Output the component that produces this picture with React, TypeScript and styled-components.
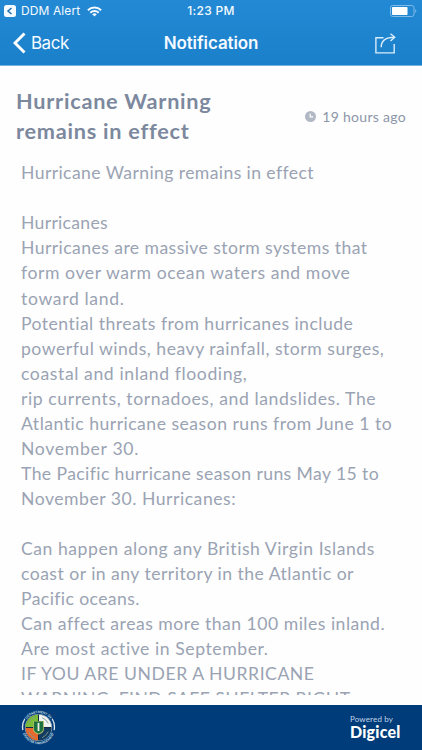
import * as React from 'react'
import styled, { createGlobalStyle } from 'styled-components'

const GlobalStyle = createGlobalStyle`
  * {
    box-sizing: border-box;
  }
  body {
    margin: 0;
    background-color: #fefefe;
  }
`

const Screen = styled.div`
  width: 422px;
  height: 750px;
  display: flex;
  flex-direction: column;
  overflow: hidden;
  background-color: #fefefe;
  font-family: Lato, 'Liberation Sans', sans-serif;
`

const Header = styled.header`
  height: 66px;
  flex: none;
  color: #f4faff;
  background: linear-gradient(#2489d4, #1b80ca);
  border-bottom: 1px solid #73b4e2;
  font-family: Inter, 'Liberation Sans', sans-serif;
`

const Bar = styled.div<{ height: number }>`
  height: ${(props) => props.height}px;
  display: grid;
  grid-template-columns: 1fr auto 1fr;
  align-items: center;
`

const Left = styled.div<{ indent: number }>`
  display: flex;
  align-items: center;
  padding-left: ${(props) => props.indent}px;
`

const Right = styled.div<{ indent: number }>`
  display: flex;
  justify-content: flex-end;
  padding-right: ${(props) => props.indent}px;
`

const StatusText = styled.span<{ strong?: boolean }>`
  font-size: 12px;
  line-height: 22px;
  font-weight: ${(props) => (props.strong ? 500 : 400)};
  letter-spacing: ${(props) => (props.strong ? '0.3px' : '0.1px')};
`

const AppName = styled(StatusText)`
  margin: 0 7px 0 5px;
`

const BackText = styled.span`
  font-size: 17px;
  margin-left: 5px;
  letter-spacing: -0.5px;
`

const NavTitle = styled.h1`
  font-size: 17px;
  font-weight: 600;
  margin: 0;
  letter-spacing: -0.1px;
`

const Content = styled.main`
  height: 629px;
  flex: none;
  overflow: hidden;
  padding: 20px 16px 0 16px;
`

const Heading = styled.div`
  display: flex;
  justify-content: space-between;
  align-items: center;
`

const Title = styled.h2`
  margin: 0;
  width: 220px;
  font-size: 21.7px;
  line-height: 30px;
  font-weight: 700;
  letter-spacing: 0.75px;
  color: #7c889d;
`

const Time = styled.div`
  display: flex;
  align-items: center;
  gap: 6px;
  font-size: 14px;
  letter-spacing: 0.3px;
  white-space: nowrap;
  color: #8c96a9;
`

const Message = styled.div`
  padding: 14.3px 0 0 5px;
  font-size: 17.6px;
  color: #9aa3b3;
`

const Line = styled.div<{ spacing?: number }>`
  height: 25.05px;
  line-height: 25.05px;
  white-space: nowrap;
  letter-spacing: ${(props) => props.spacing ?? 0.4}px;
`

const Footer = styled.footer`
  height: 45px;
  margin-top: auto;
  flex: none;
  display: flex;
  justify-content: space-between;
  align-items: center;
  padding: 0 21px;
  background-color: #003b7a;
  color: #ffffff;
`

const Powered = styled.div`
  display: flex;
  flex-direction: column;
  width: 51px;
  padding-bottom: 1px;
`

const PoweredBy = styled.span`
  font-size: 8px;
  line-height: 10px;
  letter-spacing: 0.15px;
  white-space: nowrap;
  color: #c3d4e8;
`

const Brand = styled.span`
  font-size: 16px;
  line-height: 16px;
  font-weight: 900;
  letter-spacing: 0.2px;
`

const lines: Array<{ text: string; spacing?: number }> = [
  { text: 'Hurricane Warning remains in effect' },
  { text: '' },
  { text: 'Hurricanes', spacing: 0.3 },
  { text: 'Hurricanes are massive storm systems that', spacing: 0.43 },
  { text: 'form over warm ocean waters and move', spacing: 0.57 },
  { text: 'toward land.', spacing: 0.65 },
  { text: 'Potential threats from hurricanes include', spacing: 0.46 },
  { text: 'powerful winds, heavy rainfall, storm surges,', spacing: 0.51 },
  { text: 'coastal and inland flooding,', spacing: 0.6 },
  { text: 'rip currents, tornadoes, and landslides. The', spacing: 0.59 },
  { text: 'Atlantic hurricane season runs from June 1 to', spacing: 0.49 },
  { text: 'November 30.', spacing: 0.7 },
  { text: 'The Pacific hurricane season runs May 15 to' },
  { text: 'November 30. Hurricanes:', spacing: 0.52 },
  { text: '' },
  { text: 'Can happen along any British Virgin Islands', spacing: 0.54 },
  { text: 'coast or in any territory in the Atlantic or', spacing: 0.47 },
  { text: 'Pacific oceans.' },
  { text: 'Can affect areas more than 100 miles inland.', spacing: 0.49 },
  { text: 'Are most active in September.', spacing: 0.57 },
  { text: 'IF YOU ARE UNDER A HURRICANE', spacing: 0.54 },
  { text: 'WARNING, FIND SAFE SHELTER RIGHT', spacing: 0.46 },
]

const ReturnIcon = () => (
  <svg width="12" height="12" viewBox="0 0 12 12">
    <rect width="12" height="12" rx="2.5" fill="#f4faff" />
    <path d="M7.500 3 4 6l3.500 3" fill="none" stroke="#1c6fb0" strokeWidth="1.500" />
  </svg>
)

const WifiIcon = () => (
  <svg width="15" height="11" viewBox="0 0 15 11" fill="none" stroke="#f4faff" strokeWidth="1.900">
    <path d="M.9 4.200a9.400 9.400 0 0 1 13.200 0" />
    <path d="M3.300 6.700a6 6 0 0 1 8.400 0" />
    <path d="M7.500 10.600 5.200 8.300a3.300 3.300 0 0 1 4.600 0z" fill="#f4faff" stroke="none" />
  </svg>
)

const BatteryIcon = () => (
  <svg width="27" height="12" viewBox="0 0 27 12">
    <rect x=".5" y=".5" width="23.500" height="11" rx="2.200" fill="none" stroke="#7fbbe8" />
    <rect x="2" y="2" width="15.500" height="8" rx=".8" fill="#ffffff" />
    <path d="M25.200 4.200v3.600a2 2 0 0 0 0-3.600z" fill="#7fbbe8" />
  </svg>
)

const BackIcon = () => (
  <svg width="13" height="22" viewBox="0 0 13 22">
    <path d="M11.500 1.500 2 11l9.500 9.500" fill="none" stroke="#ffffff" strokeWidth="2.900" />
  </svg>
)

const ShareIcon = () => (
  <svg width="21" height="21" viewBox="0 0 21 21" fill="none" stroke="#d9ecfa" strokeWidth="1.400">
    <path d="M8.500 4.700H.9v15.200h18.300v-9" />
    <path d="M6.200 14.300C6.200 8 10 4.300 19.500 4.300" />
    <path d="m15.500.8 4.200 3.500-4.200 3.700" />
  </svg>
)

const ClockIcon = () => (
  <svg width="11" height="11" viewBox="0 0 11 11">
    <circle cx="5.500" cy="5.500" r="5.500" fill="#b2b9c5" />
    <path d="M5.200 2.800v3h3" fill="none" stroke="#ffffff" strokeWidth="1.200" />
  </svg>
)

const SealText = styled.text`
  font-family: Lato, sans-serif;
  font-weight: 700;
  fill: #d5e2ea;
`

// Department of Disaster Management seal
const Seal = () => (
  <svg width="35" height="35" viewBox="0 0 34 34">
    <defs>
      <path id="sealTop" d="M3 17a14 14 0 0 1 28 0" />
      <path id="sealBottom" d="M.8 17a16.200 16.200 0 0 0 32.400 0" />
    </defs>
    <path d="M3.700 8.500a15.800 15.800 0 0 0-1.900 11" fill="none" stroke="#dce7ee" strokeWidth="1.300" />
    <path d="M30.300 8.500a15.800 15.800 0 0 1 1.900 11" fill="none" stroke="#dce7ee" strokeWidth="1.300" />
    <circle cx="17" cy="17" r="13.200" fill="#bccbd0" />
    <circle cx="17" cy="17" r="12.600" fill="#10283f" />
    <path d="M16.500 16.500V4.500a12 12 0 0 0-12 12z" fill="#79bd36" />
    <path d="M17.500 16.500V4.500a12 12 0 0 1 12 12z" fill="#eef3f2" />
    <path d="M16.500 17.500v12a12 12 0 0 1-12-12z" fill="#e8672b" />
    <path d="M17.500 17.500v12a12 12 0 0 0 12-12z" fill="#123c62" />
    <path d="M7.500 13q2-5 6-6M20.500 7.500q4 1.500 6 5.500M7.500 21q2 4.500 6 6M20.500 27q4-2 6-6" fill="none" stroke="#7e9991" strokeWidth=".9" />
    <path d="M11.800 10.800h10.400v8.500q-.5 3.500-5.200 4.500-4.700-1-5.200-4.500z" fill="#b4b967" />
    <path d="M12.600 11.200h8.800v7.800q-.8 3-4.400 3.800-3.600-.8-4.400-3.800z" fill="#1b713f" />
    <path d="M17 12.500v8" stroke="#e9eee0" strokeWidth="1.800" />
    <SealText fontSize="3.200">
      <textPath href="#sealTop" startOffset="50%" textAnchor="middle">DEPARTMENT OF</textPath>
    </SealText>
    <SealText fontSize="3.200">
      <textPath href="#sealBottom" startOffset="50%" textAnchor="middle">DISASTER MANAGEMENT</textPath>
    </SealText>
  </svg>
)

const App = () => {
  return (
    <>
      <GlobalStyle />
      <Screen>
        <Header>
          <Bar height={22}>
            <Left indent={4}>
              <ReturnIcon />
              <AppName>DDM Alert</AppName>
              <WifiIcon />
            </Left>
            <StatusText strong>1:23 PM</StatusText>
            <Right indent={5}>
              <BatteryIcon />
            </Right>
          </Bar>
          <Bar height={42}>
            <Left indent={13}>
              <BackIcon />
              <BackText>Back</BackText>
            </Left>
            <NavTitle>Notification</NavTitle>
            <Right indent={26}>
              <ShareIcon />
            </Right>
          </Bar>
        </Header>
        <Content>
          <Heading>
            <Title>Hurricane Warning remains in effect</Title>
            <Time>
              <ClockIcon />
              19 hours ago
            </Time>
          </Heading>
          <Message>
            {lines.map((line, index) => (
              <Line key={index} spacing={line.spacing}>{line.text}</Line>
            ))}
          </Message>
        </Content>
        <Footer>
          <Seal />
          <Powered>
            <PoweredBy>Powered by</PoweredBy>
            <Brand>Digicel</Brand>
          </Powered>
        </Footer>
      </Screen>
    </>
  )
}

export default App
